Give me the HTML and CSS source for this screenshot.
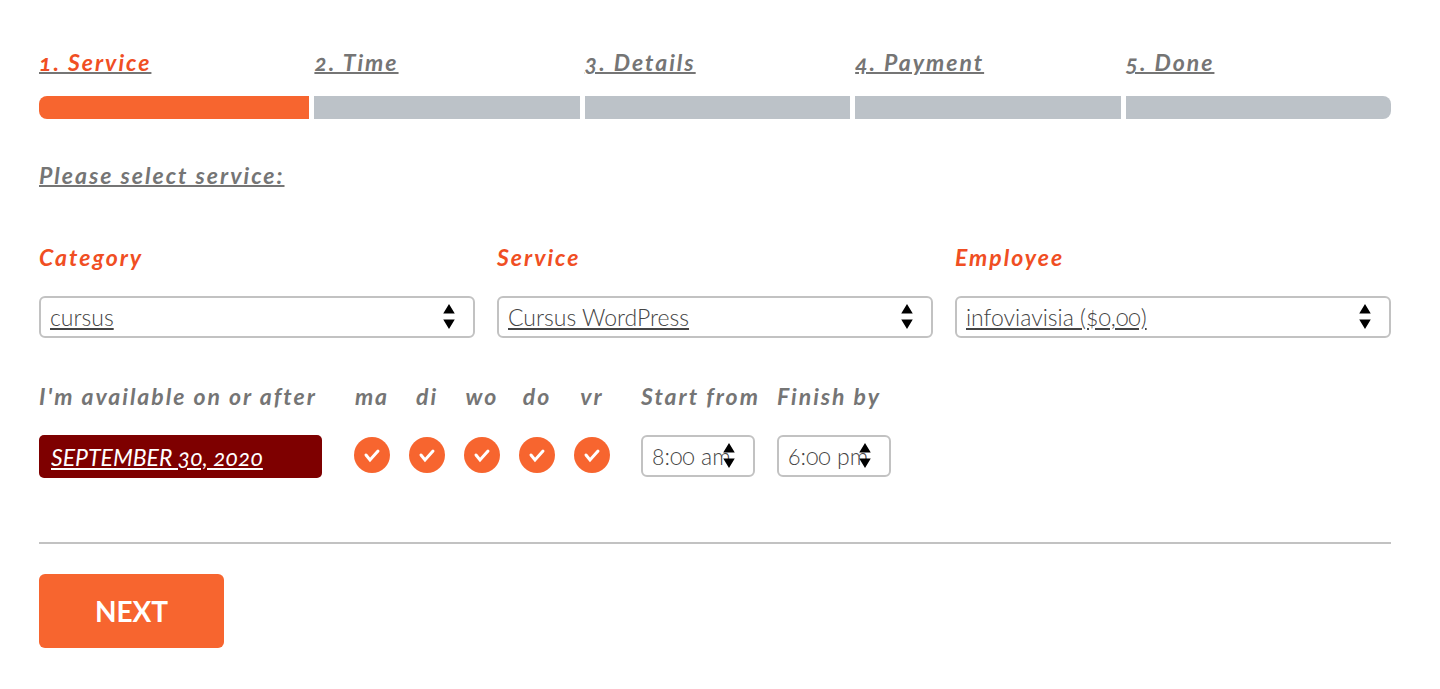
FILE: index.html
```
<!DOCTYPE html>
<html lang="en">
<head>
    <meta charset="utf-8" />
    <title>Booking</title>
    <link rel="stylesheet" href="styles.css">
</head>
<body>
    <svg width="0" height="0" class="defs">
        <symbol id="arrows" viewBox="0 0 12 26">
            <path d="M6 0 L12 10 H0 Z M0 16 H12 L6 26 Z" />
        </symbol>
    </svg>
    <form class="booking">
        <nav class="steps">
            <div class="step active"><a href="#service">1. Service</a><div class="bar"></div></div>
            <div class="step"><a href="#time">2. Time</a><div class="bar"></div></div>
            <div class="step"><a href="#details">3. Details</a><div class="bar"></div></div>
            <div class="step"><a href="#payment">4. Payment</a><div class="bar"></div></div>
            <div class="step"><a href="#done">5. Done</a><div class="bar"></div></div>
        </nav>

        <p class="info">Please select service:</p>

        <div class="fields">
            <div class="field">
                <label class="required" for="category">Category</label>
                <div class="select">
                    <select id="category"><option>cursus</option></select>
                    <svg class="arrows"><use href="#arrows" /></svg>
                </div>
            </div>
            <div class="field">
                <label class="required" for="service">Service</label>
                <div class="select">
                    <select id="service"><option>Cursus WordPress</option></select>
                    <svg class="arrows"><use href="#arrows" /></svg>
                </div>
            </div>
            <div class="field">
                <label class="required" for="employee">Employee</label>
                <div class="select">
                    <select id="employee"><option>infoviavisia ($0,00)</option></select>
                    <svg class="arrows"><use href="#arrows" /></svg>
                </div>
            </div>
        </div>

        <div class="availability">
            <div class="field date">
                <label for="date">I'm available on or after</label>
                <input type="text" id="date" value="SEPTEMBER 30, 2020" />
            </div>
            <div class="days">
                <div class="field day"><label for="ma">ma</label><input type="checkbox" id="ma" checked /></div>
                <div class="field day"><label for="di">di</label><input type="checkbox" id="di" checked /></div>
                <div class="field day"><label for="wo">wo</label><input type="checkbox" id="wo" checked /></div>
                <div class="field day"><label for="do">do</label><input type="checkbox" id="do" checked /></div>
                <div class="field day"><label for="vr">vr</label><input type="checkbox" id="vr" checked /></div>
            </div>
            <div class="field time">
                <label for="from">Start from</label>
                <div class="select">
                    <select id="from"><option>8:00 am</option></select>
                    <svg class="arrows"><use href="#arrows" /></svg>
                </div>
            </div>
            <div class="field time">
                <label for="until">Finish by</label>
                <div class="select">
                    <select id="until"><option>6:00 pm</option></select>
                    <svg class="arrows"><use href="#arrows" /></svg>
                </div>
            </div>
        </div>

        <div class="buttons">
            <button type="button" class="next">NEXT</button>
        </div>
    </form>
</body>
</html>
```

FILE: styles.css
```
* {
    box-sizing: border-box;
}
body {
    margin: 0;
    background-color: white;
    color: #757575;
    font-family: Lato, "Open Sans", sans-serif;
    font-variant-numeric: oldstyle-nums;
}
.defs {
    position: absolute;
}
.booking {
    padding: 48px 49px 40px 39px;
}
.steps {
    display: flex;
}
.step {
    width: 20%;
}
.step + .step {
    padding-left: 5px;
}
.step a, .info, label {
    font-size: 23px;
    line-height: 28px;
    font-weight: 700;
    font-style: italic;
    letter-spacing: 2px;
    white-space: nowrap;
}
.step a {
    display: block;
    color: #757575;
    text-decoration: underline;
    text-decoration-thickness: 2px;
}
.step.active a {
    color: #f04e23;
    text-decoration-color: #757575;
}
.bar {
    height: 23px;
    margin-top: 20px;
    background-color: #bcc2c8;
}
.step.active .bar {
    background-color: #f7652f;
}
.step:first-child .bar {
    border-radius: 8px 0 0 8px;
}
.step:last-child .bar {
    border-radius: 0 8px 8px 0;
}
.info {
    margin: 42px 0 54px;
    text-decoration: underline;
    text-decoration-thickness: 2px;
}
.fields {
    display: grid;
    grid-template-columns: repeat(3, 1fr);
    gap: 22px;
}
.field {
    display: flex;
    flex-direction: column;
    gap: 25px;
}
.required {
    color: #f04e23;
}
.select {
    position: relative;
}
select {
    display: block;
    appearance: none;
    width: 100%;
    height: 42px;
    padding: 0 9px;
    border: 2px solid #c2c2c2;
    border-radius: 6px;
    background-color: white;
    color: #444;
    font: 300 23px Lato, "Open Sans", sans-serif;
    font-variant-numeric: oldstyle-nums;
}
.fields select {
    text-decoration: underline;
}
.arrows {
    position: absolute;
    top: 8px;
    right: 20px;
    width: 12px;
    height: 25px;
    pointer-events: none;
}
.availability {
    display: flex;
    margin-top: 44px;
}
.date {
    width: 283px;
}
.date input {
    height: 43px;
    padding: 0 12px;
    border: none;
    border-radius: 5px;
    background-color: #7e0000;
    color: white;
    font: italic 400 23px Lato, "Open Sans", sans-serif;
    font-variant-numeric: oldstyle-nums;
    text-decoration: underline;
}
.days {
    display: flex;
    gap: 19px;
    margin: 0 31px 0 32px;
}
.day {
    align-items: center;
    width: 36px;
}
.day input {
    appearance: none;
    width: 36px;
    height: 36px;
    margin: 2px 0 0;
    border-radius: 50%;
    background: #f7652f url("data:image/svg+xml,%3Csvg xmlns='http://www.w3.org/2000/svg' viewBox='0 0 36 36'%3E%3Cpath d='M12 18l4 5 8-9' fill='none' stroke='white' stroke-width='3' stroke-linecap='round'/%3E%3C/svg%3E");
}
.time {
    width: 114px;
    margin-right: 22px;
}
.buttons {
    margin-top: 64px;
    padding-top: 30px;
    border-top: 2px solid #c2c2c2;
}
.next {
    width: 185px;
    height: 74px;
    border: none;
    border-radius: 6px;
    background-color: #f7652f;
    color: white;
    font: 700 28px Lato, "Open Sans", sans-serif;
}
```
